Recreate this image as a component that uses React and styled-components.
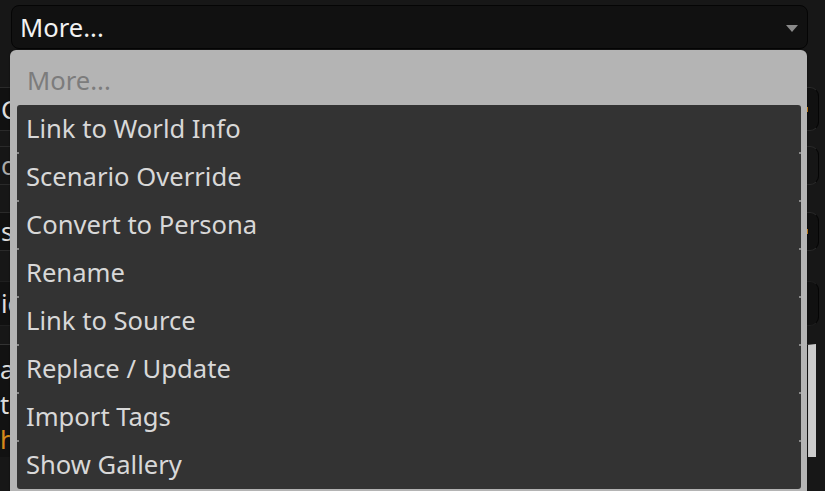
import React from 'react';
import styled, { createGlobalStyle } from 'styled-components';

const Global = createGlobalStyle`
    html, body {
        margin : 0;
        padding : 0;
        background : #171717;
        font-family : 'Noto Sans', 'Open Sans', sans-serif;
        overflow : hidden;
    }
`

const Page = styled.div`
    position : relative;
    width : 825px;
    height : 491px;
    background : #171717;
    overflow : hidden;
`

const TopSelect = styled.div`
    margin : 5px 0 0 11px;
    width : 797px;
    height : 44px;
    box-sizing : border-box;
    background : #111;
    border : 1px solid #050505;
    border-radius : 8px;
    display : flex;
    align-items : center;
    justify-content : space-between;
    padding : 0 9px 0 8px;
    color : #f2f2f2;
    font-size : 25.6px;
`

const Caret = styled.span`
    width : 0;
    height : 0;
    border-left : 6px solid transparent;
    border-right : 6px solid transparent;
    border-top : 7px solid #8a8a8a;
    margin-top : 2px;
`

const Form = styled.div`
    display : flex;
    flex-direction : column;
    margin-top : 38px;
`

const Field = styled.div`
    height : ${p => p.$h}px;
    margin-bottom : ${p => p.$gap}px;
    box-sizing : border-box;
    background : ${p => p.$bg || '#111'};
    border-top : 1px solid ${p => p.$line || '#2a2a2a'};
    border-bottom : 1px solid ${p => p.$line || '#2a2a2a'};
    border-right : 1px solid #050505;
    border-radius : 0 9px 9px 0;
    width : 819px;
    display : flex;
    align-items : center;
    justify-content : space-between;
    color : ${p => p.$color || '#ddd'};
    font-size : 25.6px;
    padding-left : 1px;
`

const Marker = styled.span`
    width : 3px;
    height : 5px;
    background : #d68a1a;
    margin-right : 10px;
`

const Sheet = styled.div`
    background : #121212;
    color : #ddd;
    font-size : 25.6px;
    line-height : 35px;
    padding-top : 7px;
    width : 808px;
    border-right : 8px solid #ccc;
    border-top : 1px solid #333;
`

const SheetLine = styled.div`
    color : ${p => p.$accent ? '#d68a1a' : '#ddd'};
`

const Listbox = styled.div`
    position : absolute;
    left : 10px;
    top : 50px;
    width : 797px;
    height : 460px;
    background : #b4b4b4;
    border-radius : 6px 6px 0 0;
    box-shadow : 0 0 2px rgba(0, 0, 0, 0.5);
`

const Placeholder = styled.div`
    height : 55px;
    box-sizing : border-box;
    display : flex;
    align-items : center;
    padding : 6px 0 0 17px;
    color : #7c7c7c;
    font-size : 25.6px;
`

const Options = styled.div`
    margin-left : 7px;
    width : 784px;
    background : #333;
    border-radius : 3px;
`

const Option = styled.div`
    position : relative;
    height : 48px;
    box-sizing : border-box;
    display : flex;
    align-items : center;
    padding : 0 0 2px 9px;
    color : #d8d8d8;
    font-size : 25.6px;

    &:not(:last-child)::before,
    &:not(:last-child)::after {
        content : "";
        position : absolute;
        bottom : -1px;
        width : 2px;
        height : 2px;
        background : #8a8a8a;
    }
    &::before { left : 0; }
    &::after { right : 0; }
`

const items = [
    'Link to World Info',
    'Scenario Override',
    'Convert to Persona',
    'Rename',
    'Link to Source',
    'Replace / Update',
    'Import Tags',
    'Show Gallery',
]

const App = () => {
    return (
        <Page>
            <Global />
            <TopSelect>
                <span>More...</span>
                <Caret />
            </TopSelect>
            <Form>
                <Field $h={44} $gap={15}>
                    <span>C</span>
                    <Marker />
                </Field>
                <Field $h={39} $gap={27} $bg="#161616" $color="#aaa">
                    <span>or</span>
                </Field>
                <Field $h={39} $gap={30}>
                    <span>s</span>
                    <Marker />
                </Field>
                <Field $h={45} $gap={18} $line="#1f1f1f">
                    <span>ic</span>
                </Field>
                <Sheet>
                    <SheetLine>a</SheetLine>
                    <SheetLine>t</SheetLine>
                    <SheetLine $accent>h</SheetLine>
                </Sheet>
            </Form>
            <Listbox>
                <Placeholder>More...</Placeholder>
                <Options>
                    {items.map(item => <Option key={item}>{item}</Option>)}
                </Options>
            </Listbox>
        </Page>
    )
}

export default App;
